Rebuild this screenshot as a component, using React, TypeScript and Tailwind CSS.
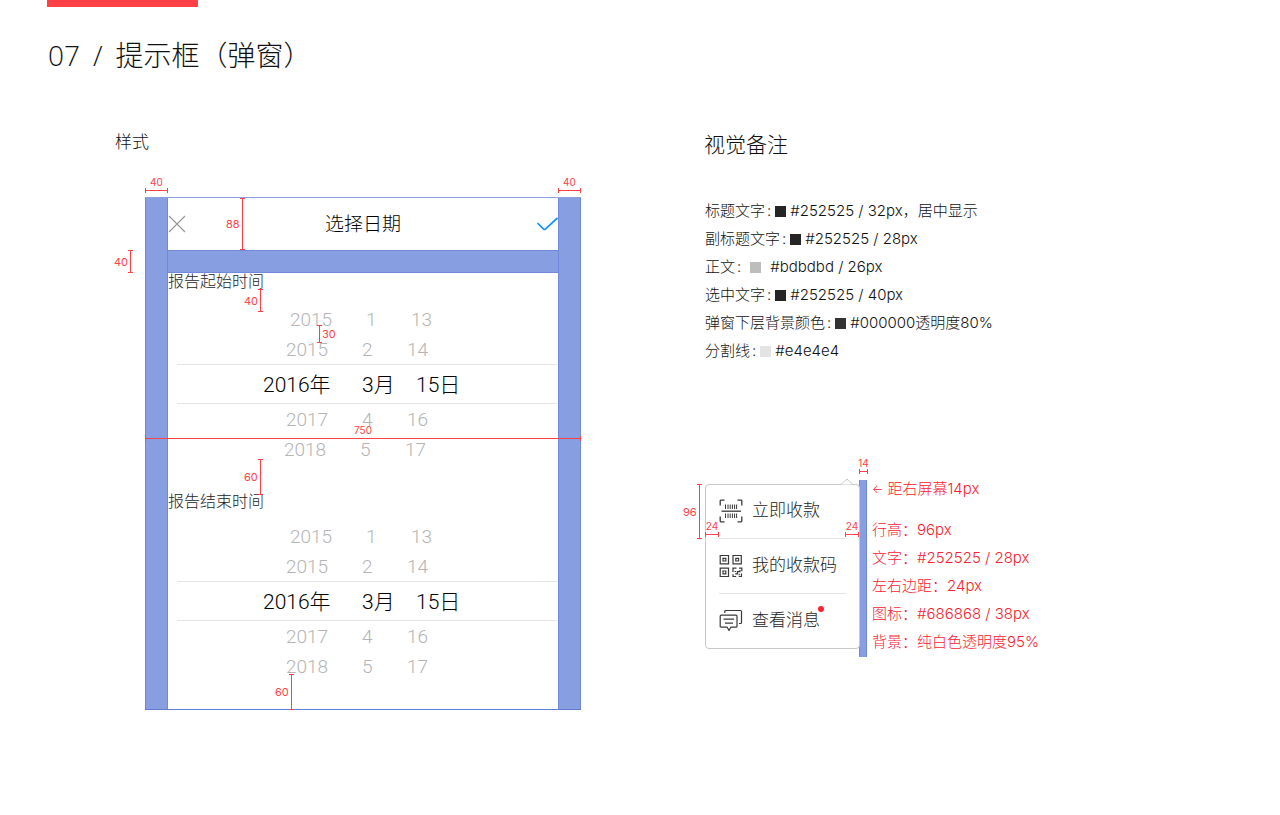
import type { ReactNode } from "react";
import clsx from "clsx";

const selected = { year: "2016年", month: "3月", day: "15日" };

const startRows = [
    { year: "2015", month: "1", day: "13", indent: "pl-[122px]" },
    { year: "2015", month: "2", day: "14", indent: "pl-[118px]" },
    { year: "2017", month: "4", day: "16", indent: "pl-[118px]" },
    { year: "2018", month: "5", day: "17", indent: "pl-[116px]" },
];

const endRows = [
    ...startRows.slice(0, 3),
    { year: "2018", month: "5", day: "17", indent: "pl-[118px]" },
];

const notes = [
    { name: "标题文字", swatch: "bg-[#252525]", value: "#252525 / 32px，居中显示" },
    { name: "副标题文字", swatch: "bg-[#252525]", value: "#252525 / 28px" },
    { name: "正文", swatch: "bg-[#bdbdbd]", value: "#bdbdbd / 26px", wide: true },
    { name: "选中文字", swatch: "bg-[#252525]", value: "#252525 / 40px" },
    { name: "弹窗下层背景颜色", swatch: "bg-[#333333]", value: "#000000透明度80%" },
    { name: "分割线", swatch: "bg-[#e4e4e4]", value: "#e4e4e4" },
];

const menuNotes = [
    "行高：96px",
    "文字：#252525 / 28px",
    "左右边距：24px",
    "图标：#686868 / 38px",
    "背景：纯白色透明度95%",
];

type MeasureProps = {
    value: string;
    className?: string;
};

// horizontal ruler, value above the line
function MeasureX({ value, className }: MeasureProps) {
    return (
        <div className={clsx("flex flex-col items-center text-[10px] leading-[12px] font-normal text-[#ff4047]", className)}>
            <span>{value}</span>
            <div className="flex h-[5px] w-full items-center border-x border-[#ff4047]">
                <div className="h-px w-full bg-[#ff4047]" />
            </div>
        </div>
    );
}

// vertical ruler, value on the left unless flipped
function MeasureY({ value, className, flip }: MeasureProps & { flip?: boolean }) {
    return (
        <div
            className={clsx(
                "flex items-center text-[11px] leading-[12px] font-normal text-[#ff4047]",
                flip && "flex-row-reverse",
                className
            )}
        >
            <span>{value}</span>
            <div className="flex h-full w-[5px] justify-center border-y border-[#ff4047]">
                <div className="h-full w-px bg-[#ff4047]" />
            </div>
        </div>
    );
}

function CloseIcon() {
    return (
        <svg width="18" height="18" viewBox="0 0 18 18" fill="none" stroke="#999" strokeWidth="1.2">
            <path d="M1 1l16 16M17 1L1 17" />
        </svg>
    );
}

function CheckIcon() {
    return (
        <svg width="21" height="14" viewBox="0 0 21 14" fill="none" stroke="#1296f3" strokeWidth="1.7">
            <path d="M.5 6l6.200 6.200q.8.6 1.600 0L20.500 1" />
        </svg>
    );
}

function ScanIcon() {
    return (
        <svg width="24" height="24" viewBox="0 0 24 24" fill="none" stroke="#3a3a3a" strokeWidth="1.3">
            <path d="M1.200 6.500V2q0-.8.8-.8h3.500M18.500 1.200H22q.8 0 .8.8v4.500M22.800 17.500V22q0 .8-.8.8h-3.500M5.500 22.800H2q-.8 0-.8-.8v-4.500" />
            <path d="M2.500 12.200h19.500" />
            <path d="M6.500 5.500v4.500M9 5.500v4.500M11.200 5.500v4.500M13.400 5.500v4.500M15.600 5.500v4.500M17.600 5.500v4.500M6.500 14.500v4.500M9 14.500v4.500M11.200 14.500v4.500M13.400 14.500v4.500M15.600 14.500v4.500M17.600 14.500v4.500" strokeWidth="1" />
        </svg>
    );
}

function QrIcon() {
    return (
        <svg width="24" height="24" viewBox="0 0 24 24" fill="none" stroke="#3a3a3a" strokeWidth="1.2">
            <path d="M1.200 1.500h8.300v8.300H1.200zM14 1.500h8.300v8.300H14zM1.200 14.200h8.300v8.300H1.200z" />
            <path d="M4 4.300h2.800V7H4zM16.800 4.300h2.800V7h-2.800zM4 17h2.800v2.800H4z" />
            <path d="M14 18v-3.800h3.500M20 14.200h2.800v3M22.500 19.500v3h-2.800M17.200 22.500H14v-2.200M16.200 19.800h2.200v-2.200h2.600v-1.500M17 17.500h-1.500M20.200 19.800v1.500" />
        </svg>
    );
}

function MessageIcon() {
    return (
        <svg width="24" height="24" viewBox="0 0 24 24" fill="none" stroke="#3a3a3a" strokeWidth="1.2" strokeLinejoin="round">
            <path d="M5.800 4V2.500q0-1 1-1H21.500q1 0 1 1V13.500q0 1-1 1H20" />
            <path d="M2.200 6.200H17q1 0 1 1v10q0 1-1 1h-5.200l-1.800 3.300-1.800-3.300H2.200q-1 0-1-1v-10q0-1 1-1z" />
            <path d="M4.500 10.200h10.500M6 14.200h8" />
        </svg>
    );
}

function Picker({ label, rows, className }: { label: string; rows: typeof startRows; className: string }) {
    const row = (item: (typeof rows)[number], i: number) => (
        <li key={i} className={clsx("grid h-[30px] grid-cols-[76px_45px_auto] items-center justify-start pt-0.5", item.indent)}>
            <span>{item.year}</span>
            <span>{item.month}</span>
            <span>{item.day}</span>
        </li>
    );

    return (
        <section>
            <h3 className="text-base leading-4 text-[#252525]">{label}</h3>
            <ul className={clsx("font-['Roboto','Noto_Sans_CJK_SC',sans-serif] text-[19px] text-[#b4b4b4]", className)}>
                {rows.slice(0, 2).map(row)}
                <li className="mr-px ml-[9px] grid h-10 grid-cols-[99px_54px_auto] items-center justify-start border-y border-[#e4e4e4] pt-1 pl-[86px] text-[21px] text-black">
                    <span>{selected.year}</span>
                    <span>{selected.month}</span>
                    <span>{selected.day}</span>
                </li>
                {rows.slice(2).map(row)}
            </ul>
        </section>
    );
}

function DateDialog() {
    return (
        <div className="relative flex border-y border-t-[#8fa3e2] border-b-[#5f7dd4]">
            <div className="w-[23px] border-x border-[#7189dc] bg-[#879ee0]" />
            <div className="min-w-0 flex-1">
                <header className="flex h-[52px] items-center justify-between">
                    <button type="button" aria-label="关闭" className="w-[21px]"><CloseIcon /></button>
                    <h2 className="pt-0.5 text-[19px] text-black">选择日期</h2>
                    <button type="button" aria-label="确定" className="w-[21px]"><CheckIcon /></button>
                </header>
                <div className="h-[23px] border-y border-[#7189dc] bg-[#879ee0]" />
                <div className="flex flex-col gap-[29px] pb-7">
                    <Picker label="报告起始时间" rows={startRows} className="mt-[15px]" />
                    <Picker label="报告结束时间" rows={endRows} className="mt-3" />
                </div>
            </div>
            <div className="w-[23px] border-x border-[#7189dc] bg-[#879ee0]" />

            <MeasureY value="40" className="absolute top-[52px] -left-[31px] h-[23px]" />
            <MeasureY value="88" className="absolute top-0 left-[81px] h-[52px]" />
            <MeasureY value="40" className="absolute top-[91px] left-[99px] h-[23px]" />
            <MeasureY value="30" flip className="absolute top-[127px] left-[172px] h-[18px]" />
            <MeasureY value="60" className="absolute top-[261px] left-[99px] h-9" />
            <MeasureY value="60" className="absolute top-[476px] left-[130px] h-9" />
            <MeasureX value="750" className="absolute inset-x-0 top-[226px]" />
        </div>
    );
}

function MenuItem({ icon, children, dot }: { icon: ReactNode; children: ReactNode; dot?: boolean }) {
    return (
        <li className="mx-[13px] border-b border-[#e4e4e4] last:border-b-0">
            <button type="button" className="flex h-[54px] w-full items-center gap-[9px] text-left text-[17px] text-[#252525]">
                {icon}
                <span className="relative">
                    {children}
                    {dot && <i className="absolute -top-0.5 -right-1 size-1.5 rounded-full bg-[#ff1f2d]" />}
                </span>
            </button>
        </li>
    );
}

function PopoverMenu() {
    return (
        <div className="relative flex">
            <div className="relative my-1 w-[155px] rounded border border-[#c8c8c8] bg-white/95">
                <svg className="absolute -top-[7px] right-[5px]" width="14" height="8" viewBox="0 0 14 8" fill="#fff" stroke="#c8c8c8">
                    <path d="M0 6.500h1L7 1l6 5.500h1" />
                </svg>
                <ul className="-mt-px">
                    <MenuItem icon={<ScanIcon />}>立即收款</MenuItem>
                    <MenuItem icon={<QrIcon />}>我的收款码</MenuItem>
                    <MenuItem icon={<MessageIcon />} dot>查看消息</MenuItem>
                </ul>
            </div>
            <div className="-mb-1 -ml-px w-2 border-x border-[#7189dc] bg-[#879ee0]" />

            <MeasureY value="96" className="absolute top-1 -left-[22px] h-[55px]" />
            <MeasureX value="24" className="absolute top-10 left-0 w-[14px]" />
            <MeasureX value="24" className="absolute top-10 left-[140px] w-[14px]" />
            <MeasureX value="14" className="absolute -top-[23px] left-[154px] w-[9px]" />
        </div>
    );
}

function App() {
    return (
        <div className="bg-white font-['Inter','Noto_Sans_CJK_SC',sans-serif] font-light text-[#111]">
            <header>
                <div className="ml-[47px] h-[7px] w-[151px] bg-[#ff4047]" />
                <h1 className="mt-7 ml-12 flex gap-[13px] font-['Open_Sans','Noto_Sans_CJK_SC',sans-serif] text-[28px] leading-10">
                    <span>07</span>
                    <span>/</span>
                    <span>提示框（弹窗）</span>
                </h1>
            </header>

            <main className="mt-[55px] flex items-start gap-[123px] pl-[115px]">
                <section className="max-w-[466px] flex-1">
                    <h2 className="text-[17px] leading-6">样式</h2>
                    <div className="mt-[22px] ml-[30px]">
                        <div className="flex h-[21px] justify-between">
                            <MeasureX value="40" className="w-[23px]" />
                            <MeasureX value="40" className="w-[23px]" />
                        </div>
                        <DateDialog />
                    </div>
                </section>

                <section className="flex-1">
                    <h2 className="text-[21px] leading-[30px]">视觉备注</h2>
                    <div className="mt-[37px] pl-px">
                        <ul className="text-[15px] leading-7">
                            {notes.map((note) => (
                                <li key={note.name} className="flex items-center">
                                    <span>{note.name}</span>
                                    <span className={note.wide ? "pr-[9px] pl-0.5" : "pr-1 pl-0.5"}>:</span>
                                    <span className={clsx("size-[11px]", note.swatch, note.wide ? "mr-[9px]" : "mr-1")} />
                                    <span>{note.value}</span>
                                </li>
                            ))}
                        </ul>

                        <div className="mt-[115px] flex items-start gap-[5px]">
                            <PopoverMenu />
                            <div className="-mt-[5px] text-[15px] leading-7 text-[#f8222e]">
                                <p className="mb-[13px] flex items-center gap-1">
                                    <span className="text-xs">←</span>
                                    <span>距右屏幕14px</span>
                                </p>
                                {menuNotes.map((note) => (
                                    <p key={note}>{note}</p>
                                ))}
                            </div>
                        </div>
                    </div>
                </section>
            </main>
        </div>
    );
}

export default App;
